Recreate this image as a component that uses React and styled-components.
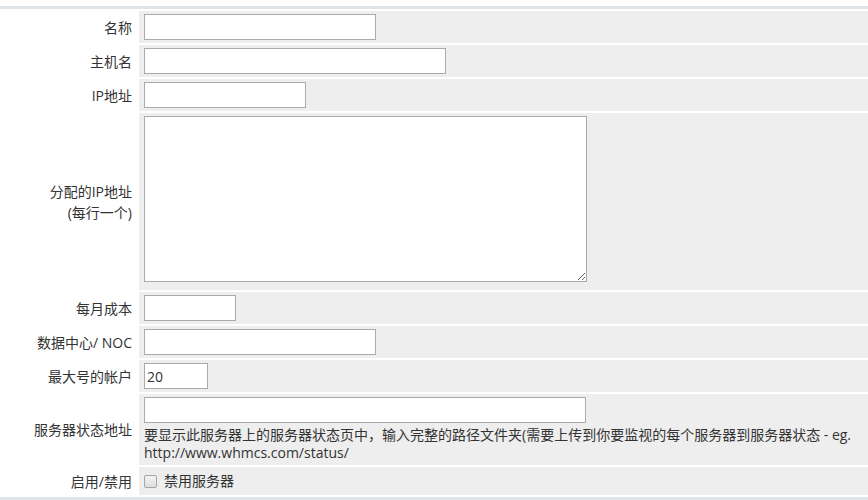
import styled, { createGlobalStyle } from "styled-components";

const GlobalStyle = createGlobalStyle`
  body {
    margin: 0;
    background: #fff;
    font-family: "Open Sans", "Noto Sans CJK SC", sans-serif;
    font-size: 14px;
    color: #333;
  }
`;

const Page = styled.div`
  padding-top: 6px;
`;

const FormTable = styled.div`
  display: grid;
  grid-template-columns: 137px 1fr;
  gap: 2px;
  padding: 2px 0;
  border-top: 3px solid #dfe5e8;
  border-bottom: 3px solid #dfe5e8;
  background: #fff;
`;

const Label = styled.div`
  display: flex;
  align-items: center;
  justify-content: flex-end;
  text-align: right;
  padding-right: 5px;
  line-height: 21px;
  background: #fff;
`;

const Field = styled.div`
  background: #eeeeee;
  padding: 3px 5px ${(p) => p.$bottom || 3}px;
  min-height: ${(p) => p.$min || 0}px;
  box-sizing: border-box;
  display: flex;
  flex-direction: column;
  justify-content: center;
`;

const TextInput = styled.input`
  display: block;
  box-sizing: border-box;
  width: ${(p) => p.$w}px;
  height: 26px;
  margin: 0;
  padding: 0 2px;
  border: 1px solid #aaa;
  background: #fff;
  font-family: "Open Sans", sans-serif;
  font-size: 14px;
  color: #333;
  outline: none;
`;

const TextArea = styled.textarea`
  display: block;
  box-sizing: border-box;
  width: 443px;
  height: 166px;
  margin: 0;
  border: 1px solid #aaa;
  background: #fff;
  outline: none;
`;

const Help = styled.div`
  margin-top: 3px;
  line-height: 18px;
  font-size: 14px;
`;

const CheckLabel = styled.label`
  display: flex;
  align-items: center;
  gap: 7px;
  line-height: 20px;
`;

const Check = styled.input`
  appearance: none;
  margin: 0;
  width: 13px;
  height: 13px;
  box-sizing: border-box;
  border: 1px solid #a6a6a6;
  border-radius: 2px;
  background: linear-gradient(#f4f4f4, #dedede);
`;

export default function App() {
  return (
    <Page>
      <GlobalStyle />
      <FormTable>
        <Label>名称</Label>
        <Field>
          <TextInput $w={232} />
        </Field>

        <Label>主机名</Label>
        <Field>
          <TextInput $w={302} />
        </Field>

        <Label>IP地址</Label>
        <Field>
          <TextInput $w={162} />
        </Field>

        <Label>
          分配的IP地址
          <br />
          (每行一个)
        </Label>
        <Field $bottom={8}>
          <TextArea />
        </Field>

        <Label>每月成本</Label>
        <Field>
          <TextInput $w={92} />
        </Field>

        <Label>数据中心/ NOC</Label>
        <Field>
          <TextInput $w={232} />
        </Field>

        <Label>最大号的帐户</Label>
        <Field>
          <TextInput $w={64} defaultValue="20" />
        </Field>

        <Label>服务器状态地址</Label>
        <Field>
          <TextInput $w={442} />
          <Help>
            要显示此服务器上的服务器状态页中，输入完整的路径文件夹(需要上传到你要监视的每个服务器到服务器状态 - eg.
            <br />
            http://www.whmcs.com/status/
          </Help>
        </Field>

        <Label>启用/禁用</Label>
        <Field $min={28} $bottom={3}>
          <CheckLabel>
            <Check type="checkbox" />
            禁用服务器
          </CheckLabel>
        </Field>
      </FormTable>
    </Page>
  );
}
